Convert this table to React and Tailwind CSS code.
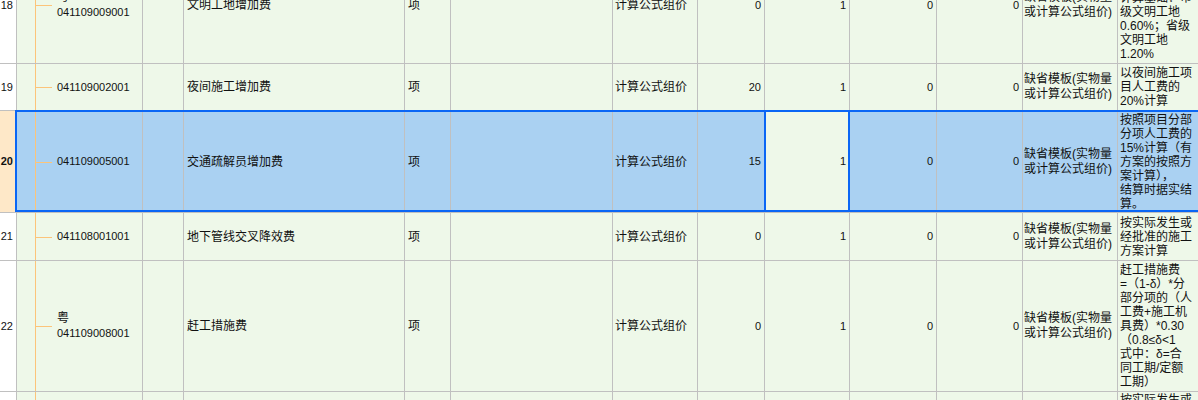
import React from "react";

const rows = [
  {
    no: 18,
    h: "h-[117px]",
    yue: true,
    code: "041109009001",
    name: "文明工地增加费",
    qty: "0",
    desc: ["按分部分项工", "程费与措施项", "目费之和为", "计算基础：市", "级文明工地", "0.60%；省级", "文明工地", "1.20%"],
  },
  {
    no: 19,
    h: "h-[47px]",
    code: "041109002001",
    name: "夜间施工增加费",
    qty: "20",
    desc: ["以夜间施工项", "目人工费的", "20%计算"],
  },
  {
    no: 20,
    h: "h-[102px]",
    sel: true,
    code: "041109005001",
    name: "交通疏解员增加费",
    qty: "15",
    desc: ["按照项目分部", "分项人工费的", "15%计算（有", "方案的按照方", "案计算），", "结算时据实结", "算。"],
  },
  {
    no: 21,
    h: "h-[48px]",
    code: "041108001001",
    name: "地下管线交叉降效费",
    qty: "0",
    desc: ["按实际发生或", "经批准的施工", "方案计算"],
  },
  {
    no: 22,
    h: "h-[131px]",
    yue: true,
    code: "041109008001",
    name: "赶工措施费",
    qty: "0",
    desc: ["赶工措施费", "=（1-δ）*分", "部分项的（人", "工费+施工机", "具费）*0.30", "（0.8≤δ<1", "式中：δ=合", "同工期/定额", "工期）"],
  },
];

const line = "border-r border-[#c0c0c0]";

const Row = ({ r }) => {
  const bg = r.sel ? "bg-[#aad1f2]" : "bg-[#eef8e9]";
  return (
    <div className={`relative flex border-b border-[#c0c0c0] ${r.h} ${bg}`}>
      <div
        className={`w-[17px] shrink-0 flex items-center justify-end pr-[3px] text-[11px] ${line} ${
          r.sel ? "bg-[#fee8c8] font-bold" : "bg-white"
        }`}
      >
        {r.no}
      </div>
      <div className={`relative w-[126px] shrink-0 flex items-center pl-[40px] ${line}`}>
        <div className="absolute left-[18px] top-0 bottom-0 w-px bg-[#fcc47a]" />
        <div className="absolute left-[18px] top-1/2 w-[17px] h-px bg-[#fcc47a]" />
        <div className="leading-[15px]">
          {r.yue && <div className="text-[12px]">粤</div>}
          <div className="text-[11px]">{r.code}</div>
        </div>
      </div>
      <div className={`w-[41px] shrink-0 ${line}`} />
      <div className={`w-[221px] shrink-0 flex items-center pl-[3px] ${line}`}>{r.name}</div>
      <div className={`w-[46px] shrink-0 flex items-center pl-[3px] ${line}`}>项</div>
      <div className={`w-[162px] shrink-0 ${line}`} />
      <div className={`w-[85px] shrink-0 flex items-center pl-[2px] ${line}`}>计算公式组价</div>
      <div className={`w-[67px] shrink-0 flex items-center justify-end pr-[3px] text-[11px] ${line}`}>{r.qty}</div>
      <div className={`w-[85px] shrink-0 flex items-center justify-end pr-[3px] text-[11px] ${line} ${r.sel ? "bg-[#eef8e9]" : ""}`}>
        1
      </div>
      <div className={`w-[87px] shrink-0 flex items-center justify-end pr-[3px] text-[11px] ${line}`}>0</div>
      <div className={`w-[86px] shrink-0 flex items-center justify-end pr-[3px] text-[11px] ${line}`}>0</div>
      <div className={`w-[95px] shrink-0 flex items-center pl-[1px] leading-[15px] ${line}`}>
        <div>
          <div>缺省模板(实物量</div>
          <div>或计算公式组价)</div>
        </div>
      </div>
      <div className={`w-[100px] shrink-0 flex items-center pl-[2px] leading-[14px] ${line}`}>
        <div className="whitespace-nowrap">
          {r.desc.map((d, i) => (
            <div key={i}>{d}</div>
          ))}
        </div>
      </div>
      {r.sel && (
        <>
          <div className="absolute -top-px bottom-0 left-[15px] right-0 border-2 border-[#0a66f5] pointer-events-none" />
          <div className="absolute -top-px bottom-0 left-[764px] w-[86px] border-2 border-[#0a66f5] pointer-events-none" />
        </>
      )}
    </div>
  );
};

export default function App() {
  return (
    <div className="h-[400px] w-[1198px] overflow-hidden bg-white text-[12px] text-[#111111] font-['Liberation_Sans','Noto_Sans_CJK_SC',sans-serif]">
      <div className="w-[1218px] -mt-[53px]">
        {rows.map((r) => (
          <Row key={r.no} r={r} />
        ))}
        <div className="relative flex h-[120px] bg-[#eef8e9]">
          <div className={`w-[17px] shrink-0 bg-white ${line}`} />
          <div className={`relative w-[126px] shrink-0 ${line}`}>
            <div className="absolute left-[18px] top-0 bottom-0 w-px bg-[#fcc47a]" />
          </div>
          <div className={`w-[41px] shrink-0 ${line}`} />
          <div className={`w-[221px] shrink-0 ${line}`} />
          <div className={`w-[46px] shrink-0 ${line}`} />
          <div className={`w-[162px] shrink-0 ${line}`} />
          <div className={`w-[85px] shrink-0 ${line}`} />
          <div className={`w-[67px] shrink-0 ${line}`} />
          <div className={`w-[85px] shrink-0 ${line}`} />
          <div className={`w-[87px] shrink-0 ${line}`} />
          <div className={`w-[86px] shrink-0 ${line}`} />
          <div className={`w-[95px] shrink-0 ${line}`} />
          <div className={`w-[100px] shrink-0 pl-[2px] pt-[1px] leading-[14px] whitespace-nowrap ${line}`}>
            <div>按实际发生或</div>
            <div>经批准的施工</div>
            <div>方案计算</div>
          </div>
        </div>
      </div>
    </div>
  );
}
